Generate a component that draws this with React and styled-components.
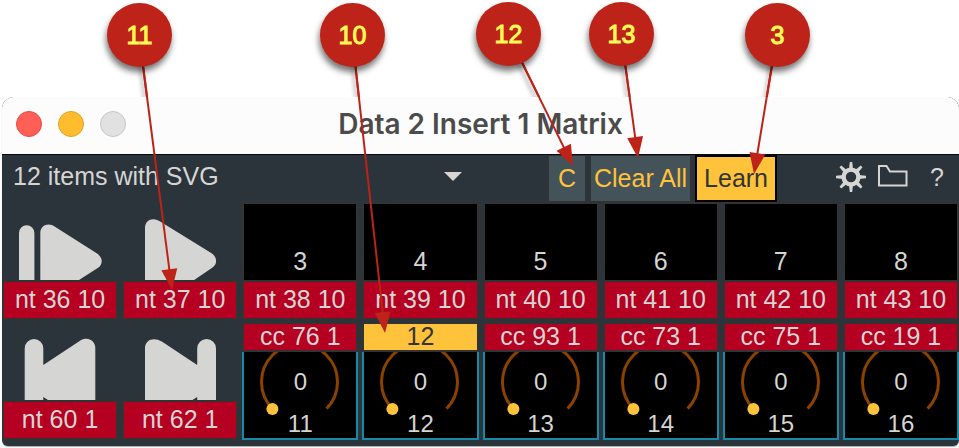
import React, { useState } from 'react';
import styled, { createGlobalStyle } from 'styled-components';

const GlobalStyle = createGlobalStyle`
  *, *::before, *::after {
    box-sizing: border-box;
  }

  body {
    margin: 0;
    background: #fff;
    color: #d5d5d3;
    font-family: 'Liberation Sans', Arial, sans-serif;
    font-size: 25px;
    line-height: 28px;
  }

  button, select {
    font: inherit;
    color: inherit;
    margin: 0;
    padding: 0;
    border: 0;
    border-radius: 0;
    background: none;
    white-space: nowrap;
  }
`;

const Page = styled.div`
  position: relative;
  padding: 97px 0 2px 2px;
  overflow: hidden;
`;

const Window = styled.main`
  position: relative;
  border-radius: 12px 12px 6px 6px;
  overflow: hidden;
  background: #2b333b;
  box-shadow: 0 1px 1px #aaa;
`;

const TitleBar = styled.header`
  display: grid;
  grid-template-columns: 1fr auto 1fr;
  align-items: center;
  height: 58px;
  padding: 0 14px 4px;
  background: #fcfcfc;
  border-bottom: 1px solid #050a0e;
`;

const Lights = styled.div`
  display: flex;
  gap: 16px;
`;

const Light = styled.button`
  width: 26px;
  height: 26px;
  border: 1px solid ${props => props.$edge};
  border-radius: 50%;
  background: ${props => props.$color};
`;

const Title = styled.h1`
  margin: 0;
  font-family: Inter, sans-serif;
  font-size: 28px;
  font-weight: 600;
  line-height: 32px;
  color: #4b4b4b;
`;

const Toolbar = styled.div`
  display: flex;
  align-items: flex-start;
  height: 47px;
`;

const Picker = styled.label`
  display: grid;
  align-items: center;
  flex: 0 0 49%;
  height: 43px;
`;

const PickerSelect = styled.select`
  grid-area: 1 / 1;
  appearance: none;
  width: 100%;
  height: 100%;
  padding: 0 0 2px 11px;
`;

const PickerArrow = styled.svg`
  grid-area: 1 / 1;
  justify-self: end;
  margin-right: 9px;
  pointer-events: none;
`;

const Actions = styled.div`
  display: flex;
  gap: 4px;
  margin-left: 77px;
`;

const ActionButton = styled.button`
  height: 47px;
  padding: 0 ${props => props.$pad}px 2px;
  border: ${props => (props.$active ? '2px solid #000' : '1px solid #333')};
  background: ${props => (props.$active ? '#ffc33b' : '#44525a')};
  color: ${props => (props.$active ? '#333' : '#ffc33b')};
`;

const Tools = styled.div`
  display: flex;
  align-items: center;
  gap: 11px;
  height: 43px;
  margin-left: auto;
  padding-right: 4px;
`;

const ToolButton = styled.button`
  display: flex;
  justify-content: center;
`;

const HelpButton = styled(ToolButton)`
  width: 36px;
`;

const Matrix = styled.div`
  display: grid;
  grid-template-columns: repeat(8, minmax(0, 1fr));
  gap: 2px 4px;
  padding-bottom: 6px;
`;

const Cell = styled.div`
  display: flex;
  flex-direction: column;
  height: 118px;
`;

const Pad = styled.button`
  display: flex;
  justify-content: center;
  align-items: flex-end;
  height: 78px;
  padding-bottom: ${props => (props.$icon ? '0' : '5px')};
  border: ${props => (props.$icon ? '0' : '2px solid #333')};
  border-bottom: 0;
  background: ${props => (props.$icon ? 'none' : '#000')};
`;

const Label = styled.button`
  height: ${props => (props.$short ? '30px' : '40px')};
  padding-bottom: 2px;
  border: 2px solid #333;
  background: ${props => (props.$learning ? '#ffc33b' : '#b50021')};
  color: ${props => (props.$learning ? '#333' : '#d5d5d3')};
  line-height: 24px;
`;

const Dial = styled.div`
  display: grid;
  justify-items: center;
  height: 88px;
  border: 2px solid #1788a8;
  border-top: 0;
  background: #000;
  font-size: 24px;
`;

const DialArc = styled.svg`
  grid-area: 1 / 1;
`;

const DialText = styled.div`
  grid-area: 1 / 1;
  display: flex;
  flex-direction: column;
  gap: 14px;
  padding-top: 16px;
  text-align: center;
`;

const ArrowLayer = styled.svg`
  position: absolute;
  top: 0;
  left: 0;
  pointer-events: none;
  filter: ${props => (props.$shadow ? 'drop-shadow(-2px 4px 2px rgba(0, 0, 0, 0.4))' : 'none')};
`;

const Badge = styled.span`
  position: absolute;
  top: ${props => props.$y - 32}px;
  left: ${props => props.$x - 32}px;
  width: 65px;
  height: 64px;
  border-radius: 50%;
  background: #bd2318;
  box-shadow: -1px 5px 6px rgba(0, 0, 0, 0.55);
  color: #fffb55;
  line-height: 64px;
  text-align: center;
  -webkit-text-stroke: 1px #fffb55;
`;

const callouts = [
  { text: '11', x: 139, y: 35, tipX: 172, tipY: 290 },
  { text: '10', x: 352, y: 35, tipX: 385, tipY: 333 },
  { text: '12', x: 508, y: 34, tipX: 573, tipY: 166 },
  { text: '13', x: 621, y: 34, tipX: 638, tipY: 158 },
  { text: '3', x: 777, y: 35, tipX: 754, tipY: 174 },
];

const topRow = [
  { icon: 'continue', label: 'nt 36 10' },
  { icon: 'play', label: 'nt 37 10' },
  { name: '3', label: 'nt 38 10' },
  { name: '4', label: 'nt 39 10' },
  { name: '5', label: 'nt 40 10' },
  { name: '6', label: 'nt 41 10' },
  { name: '7', label: 'nt 42 10' },
  { name: '8', label: 'nt 43 10' },
];

const bottomPads = [
  { icon: 'previous', label: 'nt 60 1' },
  { icon: 'next', label: 'nt 62 1' },
];

const dials = [
  { name: '11', label: 'cc 76 1' },
  { name: '12', label: '12', learning: true },
  { name: '13', label: 'cc 93 1' },
  { name: '14', label: 'cc 73 1' },
  { name: '15', label: 'cc 75 1' },
  { name: '16', label: 'cc 19 1' },
];

const padPaths = {
  continue:
    'M17 78V31a7.7 7.7 0 0 1 15.4 0V78Z M38.3 78V31C38.3 23 46.5 20 53 24.7L94.7 51.3C101.3 55.5 101.3 62.5 95.3 66.3L77 78Z',
  play: 'M23 78V26C23 17.5 31.5 14.5 38.6 19.7L89.6 51.3C95.5 55.5 95.5 62 90.2 65.7L72.2 78Z',
  previous:
    'M22.7 78V26.3a9.3 9.3 0 0 1 18.6 0V43L78 18.7C85.5 14 93.3 18.5 93.3 26V78H46L41.3 75V78Z',
  next: 'M23 78V26C23 18 31.5 14.3 40.2 19.7L75.2 43V26.3a9.4 9.4 0 0 1 18.8 0V78H75.2V75L70.5 78Z',
};

const PadIcon = ({ name }) => (
  <svg width="116" height="78" viewBox="0 0 116 78" fill="#d5d5d3">
    <path d={padPaths[name]} />
  </svg>
);

const GearIcon = () => (
  <svg width="32" height="32" viewBox="-16 -16 32 32" fill="none" stroke="#d5d5d3">
    <circle r="7.4" strokeWidth="4.4" />
    {[0, 45, 90, 135, 180, 225, 270, 315].map(angle => (
      <path key={angle} d="M-2 -8L-1.2 -15H1.2L2 -8Z" fill="#d5d5d3" stroke="none" transform={`rotate(${angle})`} />
    ))}
  </svg>
);

const FolderIcon = () => (
  <svg width="30" height="24" viewBox="0 0 30 24" fill="none" stroke="#d5d5d3" strokeWidth="2">
    <path d="M1 1H8.5L12 6.5H28.5V20.5H1Z" />
  </svg>
);

const PadCell = ({ icon, name, label }) => (
  <Cell>
    <Pad $icon={Boolean(icon)} aria-label={icon}>
      {icon ? <PadIcon name={icon} /> : name}
    </Pad>
    <Label>{label}</Label>
  </Cell>
);

const DialCell = ({ name, label, learning }) => (
  <Cell>
    <Label $short $learning={learning}>{label}</Label>
    <Dial>
      <DialArc width="112" height="86" viewBox="0 0 112 86">
        <path d="M28.4 56.6A38 38 0 1 1 82.6 56.6" fill="none" stroke="#8b4200" strokeWidth="3" />
        <circle cx="28.4" cy="57" r="6" fill="#ffc33b" />
      </DialArc>
      <DialText>
        <span>0</span>
        <span>{name}</span>
      </DialText>
    </Dial>
  </Cell>
);

const Arrows = ({ shadow }) => (
  <ArrowLayer width="959" height="448" $shadow={shadow} aria-hidden="true">
    {callouts.map(({ text, x, y, tipX, tipY }) => {
      const angle = (Math.atan2(tipY - y, tipX - x) * 180) / Math.PI;
      const length = Math.hypot(tipX - x, tipY - y);
      return (
        <g key={text} transform={`translate(${x} ${y}) rotate(${angle})`} fill="#bd2318">
          <path d={`M0 -1H${length - 18}V1H0Z`} />
          <path d={`M${length} 0l-21 -8v16Z`} />
        </g>
      );
    })}
  </ArrowLayer>
);

const App = () => {
  const [learn, setLearn] = useState(true);

  return (
    <>
      <GlobalStyle />
      <Page>
        <Arrows shadow />
        <Window>
          <TitleBar>
            <Lights>
              <Light $color="#ff5f57" $edge="#e9483f" aria-label="Close" />
              <Light $color="#febc2e" $edge="#e0a11d" aria-label="Minimize" />
              <Light $color="#e1e1e1" $edge="#c6c6c6" aria-label="Zoom" />
            </Lights>
            <Title>Data 2 Insert 1 Matrix</Title>
          </TitleBar>

          <Toolbar>
            <Picker>
              <PickerSelect aria-label="Preset">
                <option>12 items with SVG</option>
              </PickerSelect>
              <PickerArrow width="18" height="9" viewBox="0 0 18 9">
                <path d="M0 0H18L9 9Z" fill="#d5d5d3" />
              </PickerArrow>
            </Picker>
            <Actions>
              <ActionButton $pad={9}>C</ActionButton>
              <ActionButton $pad={3}>Clear All</ActionButton>
              <ActionButton $pad={7} $active={learn} onClick={() => setLearn(!learn)}>
                Learn
              </ActionButton>
            </Actions>
            <Tools>
              <ToolButton aria-label="Settings"><GearIcon /></ToolButton>
              <ToolButton aria-label="Open folder"><FolderIcon /></ToolButton>
              <HelpButton aria-label="Help">?</HelpButton>
            </Tools>
          </Toolbar>

          <Matrix>
            {topRow.map(item => <PadCell key={item.label} {...item} />)}
            {bottomPads.map(item => <PadCell key={item.label} {...item} />)}
            {dials.map(item => <DialCell key={item.name} {...item} />)}
          </Matrix>
        </Window>
        <Arrows />
        {callouts.map(({ text, x, y }) => (
          <Badge key={text} $x={x} $y={y}>{text}</Badge>
        ))}
      </Page>
    </>
  );
};

export default App;
